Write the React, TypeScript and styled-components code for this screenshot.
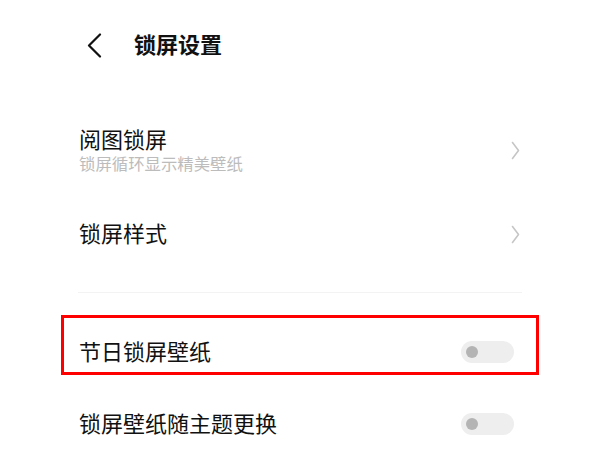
import React from "react";
import styled, { createGlobalStyle } from "styled-components";

const GlobalStyle = createGlobalStyle`
  html, body {
    margin: 0;
    padding: 0;
    background: #ffffff;
  }
  body {
    font-family: "Noto Sans CJK SC", "Noto Sans", sans-serif;
    color: #111111;
  }
`;

const Page = styled.div`
  width: 600px;
  height: 450px;
  overflow: hidden;
  background: #ffffff;
`;

const Header = styled.header`
  display: flex;
  align-items: center;
  height: 90px;
  padding-left: 87px;
  gap: 31px;
`;

const BackButton = styled.button`
  display: flex;
  padding: 0;
  border: none;
  background: none;
  cursor: pointer;
`;

const Title = styled.h1`
  margin: 0;
  padding-bottom: 4px;
  font-size: 22px;
  font-weight: 700;
  line-height: 30px;
  color: #111111;
`;

const List = styled.div`
  padding: 10px 78px 0 78px;
`;

const Group = styled.section`
  display: flex;
  flex-direction: column;
`;

interface RowProps {
  readonly $height: number;
  readonly $highlighted?: boolean;
}

const Row = styled.div<RowProps>`
  position: relative;
  display: flex;
  align-items: center;
  justify-content: space-between;
  height: ${(p) => p.$height}px;
  padding-left: 1px;

  &::after {
    content: "";
    display: ${(p) => (p.$highlighted ? "block" : "none")};
    position: absolute;
    top: -1px;
    bottom: 13px;
    left: -17px;
    right: -17px;
    border: 3px solid #ff0000;
    pointer-events: none;
  }
`;

const Label = styled.span`
  padding-bottom: 4px;
  font-size: 22px;
  line-height: 30px;
  color: #111111;
`;

const Texts = styled.div`
  display: flex;
  flex-direction: column;
  padding-bottom: 4px;

  ${Label} {
    padding-bottom: 0;
  }
`;

const Hint = styled.span`
  font-size: 16.4px;
  line-height: 20px;
  color: #bcbcbc;
`;

const Chevron = styled.svg`
  margin-right: 2px;
  flex-shrink: 0;
`;

const Divider = styled.hr`
  margin: 24px 0 23px 0;
  border: none;
  height: 1px;
  background: #f3f3f3;
`;

interface SwitchProps {
  readonly $on?: boolean;
}

const Switch = styled.div<SwitchProps>`
  position: relative;
  width: 53px;
  height: 22px;
  margin-right: 8px;
  border-radius: 11px;
  background: ${(p) => (p.$on ? "#3482ff" : "#eeeeee")};
  flex-shrink: 0;
`;

const Knob = styled.span<SwitchProps>`
  position: absolute;
  top: 5px;
  left: ${(p) => (p.$on ? "36px" : "5px")};
  width: 12px;
  height: 12px;
  border-radius: 50%;
  background: ${(p) => (p.$on ? "#ffffff" : "#b4b4b4")};
`;

function ArrowRight() {
  return (
    <Chevron width="9" height="19" viewBox="0 0 9 19">
      <polyline
        points="1.5,1.5 7.5,9.5 1.5,17.5"
        fill="none"
        stroke="#c6c6c6"
        strokeWidth="1.6"
        strokeLinecap="round"
        strokeLinejoin="round"
      />
    </Chevron>
  );
}

function Toggle({ on }: { on?: boolean }) {
  return (
    <Switch $on={on}>
      <Knob $on={on} />
    </Switch>
  );
}

export default function App() {
  return (
    <Page>
      <GlobalStyle />
      <Header>
        <BackButton aria-label="返回">
          <svg width="16" height="25" viewBox="0 0 16 25">
            <polyline
              points="13,1.5 2,12.5 13,23.5"
              fill="none"
              stroke="#111111"
              strokeWidth="2.2"
              strokeLinecap="round"
              strokeLinejoin="round"
            />
          </svg>
        </BackButton>
        <Title>锁屏设置</Title>
      </Header>
      <List>
        <Group>
          <Row $height={100}>
            <Texts>
              <Label>阅图锁屏</Label>
              <Hint>锁屏循环显示精美壁纸</Hint>
            </Texts>
            <ArrowRight />
          </Row>
          <Row $height={68}>
            <Label>锁屏样式</Label>
            <ArrowRight />
          </Row>
        </Group>
        <Divider />
        <Group>
          <Row $height={72} $highlighted>
            <Label>节日锁屏壁纸</Label>
            <Toggle />
          </Row>
          <Row $height={72}>
            <Label>锁屏壁纸随主题更换</Label>
            <Toggle />
          </Row>
        </Group>
      </List>
    </Page>
  );
}
